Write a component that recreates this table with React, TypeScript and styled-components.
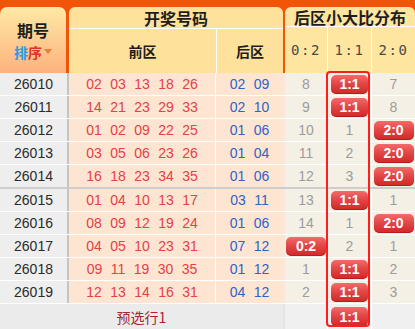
import React from 'react';
import styled, { createGlobalStyle } from 'styled-components';

const GlobalStyle = createGlobalStyle`
  html, body {
    margin: 0;
    padding: 0;
    background: #fff;
  }
  body {
    font-family: "Liberation Sans", Arial, "Noto Sans CJK SC", sans-serif;
  }
`;

// null marks the hit (drawn as a badge), undefined an empty cell
type Cell = number | null | undefined;

interface IDraw {
  period: string;
  front: string[];
  back: string[];
  ratio: Cell[];
}

const LABELS = ['0:2', '1:1', '2:0'];
const COL_W = [42, 44, 44];
const BADGE_W = [40, 37, 40];

const draws: IDraw[] = [
  { period: '26010', front: ['02', '03', '13', '18', '26'], back: ['02', '09'], ratio: [8, null, 7] },
  { period: '26011', front: ['14', '21', '23', '29', '33'], back: ['02', '10'], ratio: [9, null, 8] },
  { period: '26012', front: ['01', '02', '09', '22', '25'], back: ['01', '06'], ratio: [10, 1, null] },
  { period: '26013', front: ['03', '05', '06', '23', '26'], back: ['01', '04'], ratio: [11, 2, null] },
  { period: '26014', front: ['16', '18', '23', '34', '35'], back: ['01', '06'], ratio: [12, 3, null] },
  { period: '26015', front: ['01', '04', '10', '13', '17'], back: ['03', '11'], ratio: [13, null, 1] },
  { period: '26016', front: ['08', '09', '12', '19', '24'], back: ['01', '06'], ratio: [14, 1, null] },
  { period: '26017', front: ['04', '05', '10', '23', '31'], back: ['07', '12'], ratio: [null, 2, 1] },
  { period: '26018', front: ['09', '11', '19', '30', '35'], back: ['01', '12'], ratio: [1, null, 2] },
  { period: '26019', front: ['12', '13', '14', '16', '31'], back: ['04', '12'], ratio: [2, null, 3] },
];

const Board = styled.div`
  position: relative;
  width: 415px;
  overflow: hidden;
`;

/* Header */
const HeaderBar = styled.div`
  display: flex;
  height: 73px;
  box-sizing: border-box;
  padding-top: 7px;
  background: #f2550a;
`;

const PeriodHead = styled.div`
  width: 66px;
  margin-right: 3px;
  border-radius: 7px 7px 0 0;
  background: linear-gradient(#fee9a5, #fdb27d);
  display: flex;
  flex-direction: column;
  align-items: center;
  justify-content: center;
  gap: 7px;
`;

const PeriodTitle = styled.div`
  font-family: "Noto Sans CJK SC", sans-serif;
  font-weight: bold;
  font-size: 16px;
  line-height: 16px;
  color: #1e1e1e;
`;

const SortLink = styled.div`
  display: flex;
  align-items: center;
  font-family: "Noto Sans CJK SC", sans-serif;
  font-weight: bold;
  font-size: 14px;
  line-height: 14px;
`;

const SortChar = styled.span<{ $color: string }>`
  color: ${(p) => p.$color};
`;

const Caret = styled.span`
  width: 0;
  height: 0;
  margin-left: 2px;
  border-left: 4px solid transparent;
  border-right: 4px solid transparent;
  border-top: 5px solid #f47b2c;
`;

const GroupHead = styled.div<{ $w: number; $bg: string }>`
  width: ${(p) => p.$w}px;
  display: flex;
  flex-direction: column;
  background: ${(p) => p.$bg};
  border-radius: 6px 6px 0 0;
`;

const GroupTitle = styled.div<{ $h: number }>`
  height: ${(p) => p.$h}px;
  border-bottom: 1px solid #fff;
  display: flex;
  align-items: center;
  justify-content: center;
  font-family: "Noto Sans CJK SC", sans-serif;
  font-weight: bold;
  font-size: 16px;
  color: #1e1e1e;
`;

const SubRow = styled.div`
  flex: 1;
  display: flex;
`;

const SubCell = styled.div<{ $w: number; $mono?: boolean }>`
  width: ${(p) => p.$w}px;
  box-sizing: border-box;
  display: flex;
  align-items: center;
  justify-content: center;
  font-family: ${(p) => (p.$mono ? '"DejaVu Sans Mono", monospace' : '"Noto Sans CJK SC", sans-serif')};
  font-weight: ${(p) => (p.$mono ? 'normal' : 'bold')};
  font-size: 14px;
  letter-spacing: ${(p) => (p.$mono ? '1.5px' : '0')};
  color: ${(p) => (p.$mono ? '#4a4a4a' : '#1e1e1e')};

  & + & {
    border-left: 1px solid #fff;
  }
`;

const Spacer = styled.div<{ $w: number }>`
  width: ${(p) => p.$w}px;
`;

/* Body */
const Row = styled.div<{ $split?: boolean }>`
  display: flex;
  height: ${(p) => (p.$split ? 24 : 23)}px;
  box-sizing: border-box;
  border-bottom: ${(p) => (p.$split ? '2px solid #cdcdcd' : '1px solid #fff')};
`;

const PeriodCell = styled.div`
  width: 69px;
  box-sizing: border-box;
  border-right: 2px solid #c4c4c4;
  background: #eeeeee;
  color: #2b2b2b;
  font-size: 14px;
  display: flex;
  align-items: center;
  justify-content: center;
`;

const BallCell = styled.div<{ $w: number; $color: string; $edge: string }>`
  width: ${(p) => p.$w}px;
  box-sizing: border-box;
  border-right: ${(p) => p.$edge};
  background: #fde5d1;
  color: ${(p) => p.$color};
  font-size: 14px;
  display: flex;
  align-items: center;
  justify-content: center;
  gap: 8.4px;
`;

const RatioCell = styled.div<{ $w: number; $bg?: string }>`
  width: ${(p) => p.$w}px;
  box-sizing: border-box;
  background: ${(p) => p.$bg || '#f4f0e6'};
  color: #9c9c9c;
  font-size: 14px;
  display: flex;
  align-items: center;
  justify-content: center;

  & + & {
    border-left: 1px solid #fff;
  }
`;

const Badge = styled.span<{ $w: number }>`
  width: ${(p) => p.$w}px;
  height: 19px;
  border-radius: 5px;
  background: linear-gradient(#f46a6a, #e04444 50%, #d02828);
  box-shadow: inset 0 -1px 0 rgba(150, 0, 0, 0.35);
  color: #fff;
  font-weight: bold;
  font-size: 14px;
  display: flex;
  align-items: center;
  justify-content: center;
`;

const FootRow = styled.div`
  display: flex;
  height: 25px;
`;

const FootLabel = styled.div`
  width: 283px;
  border-right: 2px solid #e4e4e4;
  background: #ebebeb;
  color: #a8262b;
  font-family: "Noto Sans CJK SC", sans-serif;
  font-size: 14px;
  display: flex;
  align-items: center;
  justify-content: center;
`;

/* red frame over the 1:1 column */
const Highlight = styled.div`
  position: absolute;
  left: 326px;
  top: 71px;
  width: 44px;
  height: 256px;
  box-sizing: border-box;
  border: 2px solid #ff1e1e;
  border-radius: 4px;
  pointer-events: none;
`;

const RatioCells: React.FC<{ values: Cell[]; bg?: string }> = ({ values, bg }) => (
  <>
    {values.map((v, i) => (
      <RatioCell key={i} $w={COL_W[i]} $bg={bg}>
        {v === null ? <Badge $w={BADGE_W[i]}>{LABELS[i]}</Badge> : v}
      </RatioCell>
    ))}
  </>
);

const App: React.FC = () => (
  <Board>
    <GlobalStyle />
    <HeaderBar>
      <PeriodHead>
        <PeriodTitle>期号</PeriodTitle>
        <SortLink>
          <SortChar $color="#2b9be6">排</SortChar>
          <SortChar $color="#d8342c">序</SortChar>
          <Caret />
        </SortLink>
      </PeriodHead>
      <GroupHead $w={214} $bg="#fee29b">
        <GroupTitle $h={21}>开奖号码</GroupTitle>
        <SubRow>
          <SubCell $w={147}>前区</SubCell>
          <SubCell $w={67}>后区</SubCell>
        </SubRow>
      </GroupHead>
      <Spacer $w={2} />
      <GroupHead $w={130} $bg="#fee5a0">
        <GroupTitle $h={19}>后区小大比分布</GroupTitle>
        <SubRow>
          {LABELS.map((l, i) => (
            <SubCell key={l} $w={COL_W[i]} $mono>
              {l}
            </SubCell>
          ))}
        </SubRow>
      </GroupHead>
    </HeaderBar>

    {draws.map((d, idx) => (
      <Row key={d.period} $split={idx === 4}>
        <PeriodCell>{d.period}</PeriodCell>
        <BallCell $w={147} $color="#e64048" $edge="1px solid #fff">
          {d.front.map((n, i) => (
            <span key={i}>{n}</span>
          ))}
        </BallCell>
        <BallCell $w={69} $color="#2f63c8" $edge="2px solid #f6e8dc">
          {d.back.map((n, i) => (
            <span key={i}>{n}</span>
          ))}
        </BallCell>
        <RatioCells values={d.ratio} />
      </Row>
    ))}

    <FootRow>
      <FootLabel>预选行1</FootLabel>
      <RatioCells values={[undefined, null, undefined]} bg="#f0f0f0" />
    </FootRow>

    <Highlight />
  </Board>
);

export default App;
